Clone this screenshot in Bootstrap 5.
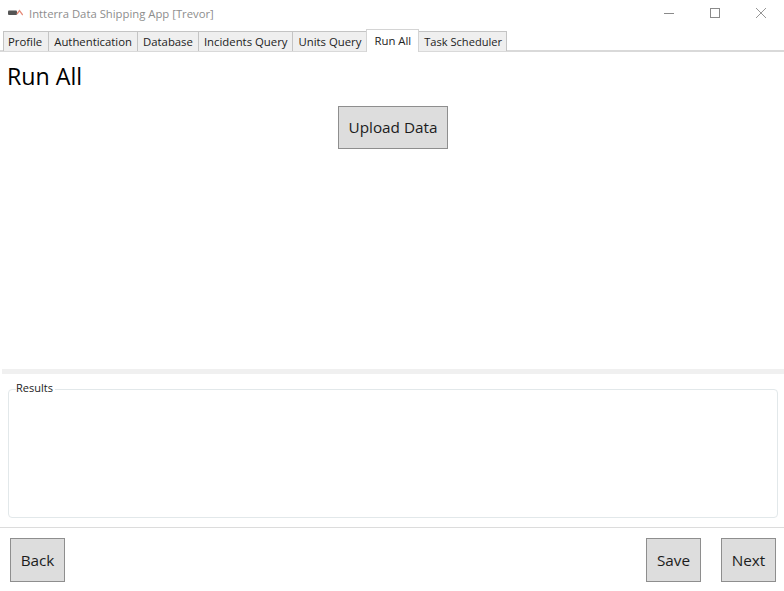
<!DOCTYPE html>
<html lang="en">
<head>
<meta charset="utf-8">
<title>Intterra Data Shipping App</title>
<link href="https://cdn.jsdelivr.net/npm/bootstrap@5.3.0/dist/css/bootstrap.min.css" rel="stylesheet">
<style>
html,body{height:591px;overflow:hidden;background:#fff}
body{font-family:"Open Sans","Noto Sans",sans-serif;color:#000}
.app-win{width:784px;height:591px}
.title-bar{height:29px;padding-left:8px;padding-bottom:1px;font-size:11.3px;color:#8d8d8d}
.title-logo{margin-right:6px;margin-top:-2px}
.win-ctl{width:46px;height:26px;margin-bottom:3px}
.tab-strip{height:23px;padding-left:3px;border-bottom:2px solid #d9d9d9;flex-wrap:nowrap;align-items:flex-end}
.tab-strip .nav-link{height:20px;margin:0 0 -1px 0;padding:0 5px;font-size:11.35px;line-height:19px;color:#222;background:#efefef;border:1px solid #c4c4c4;border-bottom:0;border-radius:0;margin-left:-1px}
.tab-strip .nav-item:first-child .nav-link{margin-left:0;padding-left:4px;padding-right:6px}
.tab-strip .nav-item:last-child .nav-link{font-size:11.1px;padding-right:4px}
.tab-strip .nav-link.active{height:23px;line-height:21px;padding:0 7px;background:#fff;border-color:#d4d4d4;color:#222;position:relative;z-index:1;margin-bottom:-2px}
.run-title{font-size:23.2px;font-weight:400;line-height:30px;margin:9px 0 0 7px}
.top-pane{height:317px}
.grey-btn{background:#dddddd;border:1px solid #8e8e8e;border-radius:0;color:#1c1c1c;padding:0;font-size:15.3px;height:43px}
.grey-btn:hover{background:#dddddd;border-color:#8e8e8e;color:#1c1c1c}
.upload-btn{width:110px;margin-top:15px;margin-left:2px}
.pane-split{height:5px;margin-left:2px;background:#f0f0f0}
.result-box{margin:8px 6px 0 8px;height:136px;border:1px solid #e2e8ea;border-radius:4px;padding:0 7px}
.result-box legend{float:none;width:auto;font-size:11px;line-height:14px;margin:0;padding:0 2px 0 0;color:#1c1c1c;position:relative;top:-1px}
.foot-rule{height:1px;background:#dcdcdc;margin-top:9px}
.foot-bar{padding:10px 8px 0 10px}
.back-btn{width:55px;height:44px}
.save-btn{width:55px;height:44px;margin-right:20px}
.next-btn{width:55px;height:44px}
</style>
</head>
<body>
<div class="app-win d-flex flex-column">
  <div class="title-bar d-flex align-items-center">
    <svg class="title-logo" width="15" height="8" viewBox="0 0 15 8"><rect x="0" y="1.5" width="9" height="4.5" rx="1" fill="#555"/><path d="M9 5 L11.5 1.5 L14.8 6" fill="none" stroke="#e58a78" stroke-width="1.3"/></svg>
    <span>Intterra Data Shipping App [Trevor]</span>
    <div class="ms-auto d-flex">
      <div class="win-ctl d-flex align-items-center justify-content-center"><svg width="10" height="10" viewBox="0 0 10 10"><path d="M0 5.5H10" stroke="#8a8a8a" fill="none"/></svg></div>
      <div class="win-ctl d-flex align-items-center justify-content-center"><svg width="10" height="10" viewBox="0 0 10 10"><rect x=".5" y=".5" width="9" height="9" stroke="#8a8a8a" fill="none"/></svg></div>
      <div class="win-ctl d-flex align-items-center justify-content-center"><svg width="10" height="10" viewBox="0 0 10 10"><path d="M0 0L10 10M10 0L0 10" stroke="#8a8a8a" fill="none" stroke-width=".9"/></svg></div>
    </div>
  </div>
  <ul class="nav nav-tabs tab-strip">
    <li class="nav-item"><a class="nav-link" href="#">Profile</a></li>
    <li class="nav-item"><a class="nav-link" href="#">Authentication</a></li>
    <li class="nav-item"><a class="nav-link" href="#">Database</a></li>
    <li class="nav-item"><a class="nav-link" href="#">Incidents Query</a></li>
    <li class="nav-item"><a class="nav-link" href="#">Units Query</a></li>
    <li class="nav-item"><a class="nav-link active" href="#">Run All</a></li>
    <li class="nav-item"><a class="nav-link" href="#">Task Scheduler</a></li>
  </ul>
  <div class="top-pane d-flex flex-column">
    <h1 class="run-title">Run All</h1>
    <div class="d-flex justify-content-center"><button type="button" class="btn grey-btn upload-btn">Upload Data</button></div>
  </div>
  <div class="pane-split"></div>
  <fieldset class="result-box"><legend>Results</legend></fieldset>
  <div class="foot-rule"></div>
  <div class="foot-bar d-flex">
    <button type="button" class="btn grey-btn back-btn">Back</button>
    <button type="button" class="btn grey-btn save-btn ms-auto">Save</button>
    <button type="button" class="btn grey-btn next-btn">Next</button>
  </div>
</div>
<script src="https://cdn.jsdelivr.net/npm/bootstrap@5.3.0/dist/js/bootstrap.bundle.min.js"></script>
</body>
</html>
